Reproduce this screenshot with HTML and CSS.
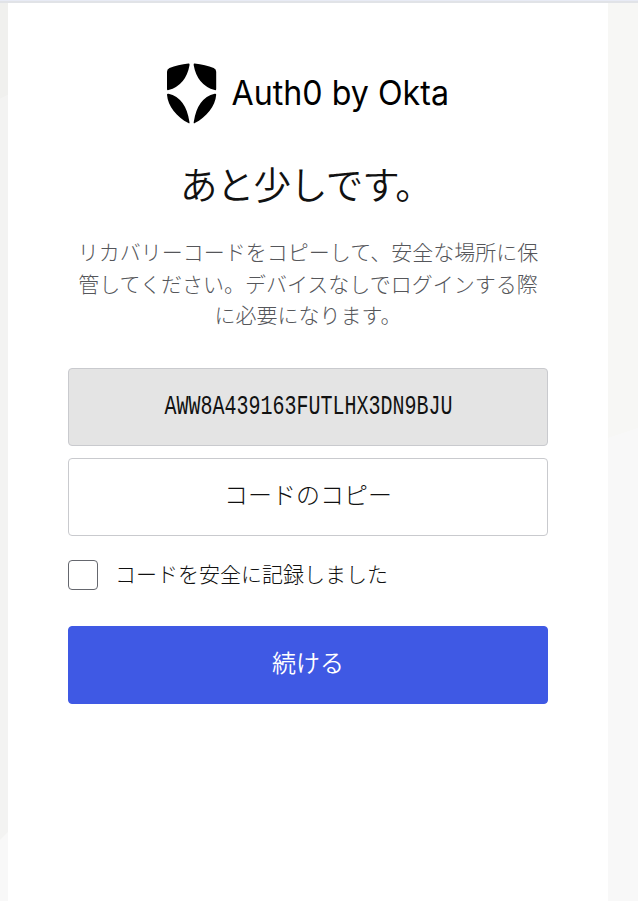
FILE: index.html
```html
<!DOCTYPE html>
<html lang="ja">
<head>
<meta charset="utf-8">
<title>Auth0 by Okta</title>
<link rel="stylesheet" href="styles.css">
</head>
<body>
<svg class="backdrop" viewBox="0 0 638 901" aria-hidden="true">
  <rect width="638" height="901" fill="#f8f8f8"/>
  <path d="M0 0H8V95L0 99Z" fill="#f0f0ee"/>
  <path d="M0 99L8 95V832L0 840Z" fill="#f3f3f2"/>
  <path d="M608 0H638V428L608 438Z" fill="#f7f7f5"/>
  <rect width="638" height="1" fill="#e8ebf5"/>
  <rect y="1" width="638" height="2" fill="#e1e3e7"/>
</svg>
<main class="card">
  <svg class="logo" viewBox="-8 0 300 62" role="img" aria-label="Auth0 by Okta">
    <path d="M23.5 1.1Q23.5 .4 22.6 .5Q11.7 1.6 3.5 5Q1 6 1 8.8V26Q1 27.5 2.5 27.1Q20 22 23.5 2.2Z"/>
    <path d="M27.7 1.1Q27.7 .4 28.6 .5Q39.5 1.6 47.7 5Q50.2 6 50.2 8.8V26Q50.2 27.5 48.7 27.1Q31.2 22 27.7 2.2Z"/>
    <path d="M1 31.7Q1 30.5 2.5 30.8Q20 35 23.5 59.3Q23.7 61 22.4 60.1C11 54 1.8 43.5 1 31.7Z"/>
    <path d="M50.2 31.7Q50.2 30.5 48.7 30.8Q31.2 35 27.7 59.3Q27.5 61 28.8 60.1C40.2 54 49.4 43.5 50.2 31.7Z"/>
    <text class="wordmark" x="65.5" y="42.3" textLength="217.5" lengthAdjust="spacingAndGlyphs">Auth0 by Okta</text>
  </svg>
  <h1 class="title">あと少しです。</h1>
  <p class="description">リカバリーコードをコピーして、安全な場所に保管してください。デバイスなしでログインする際に必要になります。</p>
  <div class="box code"><span class="code-text">AWW8A439163FUTLHX3DN9BJU</span></div>
  <button class="box copy" type="button">コードのコピー</button>
  <label class="confirm"><input class="check" type="checkbox"><span>コードを安全に記録しました</span></label>
  <button class="box continue" type="button">続ける</button>
</main>
</body>
</html>
```
FILE: styles.css
```css
* { box-sizing: border-box; }
body {
  margin: 0;
  height: 901px;
  overflow: hidden;
  font-family: "Noto Sans CJK JP", sans-serif;
  font-weight: 300;
  color: #111;
}
.backdrop {
  position: absolute;
  inset: 0;
  z-index: -1;
  width: 638px;
  height: 901px;
}
.card {
  display: flex;
  flex-direction: column;
  width: 600px;
  height: 898px;
  margin: 3px 0 0 8px;
  padding: 59.5px 60px 0;
  background: #fff;
}
.logo {
  width: 300px;
  height: 62px;
  align-self: center;
}
.wordmark {
  font: 400 33.5px Inter, sans-serif;
  fill: #000;
}
.title {
  margin: 31px 4px 0 0;
  font-size: 37.5px;
  font-weight: 350;
  line-height: 54px;
  letter-spacing: -.8px;
  text-align: center;
}
.description {
  width: 464px;
  margin: 26.5px auto 0;
  font-size: 21px;
  line-height: 31.5px;
  text-align: center;
  color: #55565a;
}
.box {
  display: flex;
  align-items: center;
  justify-content: center;
  width: 480px;
  height: 78px;
  flex: none;
  padding: 0 0 7px;
  border: 1px solid #c9cace;
  border-radius: 4px;
  font: inherit;
  font-size: 24px;
  color: #111;
  background: #fff;
}
.code {
  margin-top: 37.5px;
  padding: 0;
  background: #e4e4e4;
}
.code-text {
  font: 400 27px "Liberation Mono", monospace;
  transform: scaleX(.7405);
}
.copy { margin-top: 12px; }
.confirm {
  display: flex;
  align-items: center;
  gap: 17px;
  height: 30px;
  margin-top: 24px;
  font-size: 21px;
  line-height: 30px;
}
.confirm span { margin-top: -4px; }
.check {
  appearance: none;
  width: 30px;
  height: 30px;
  margin: 0;
  border: 1px solid #65676e;
  border-radius: 4px;
  background: #fff;
}
.continue {
  margin-top: 36px;
  border-color: #3f59e4;
  background: #3f59e4;
  color: #fff;
  font-weight: 350;
}
```
